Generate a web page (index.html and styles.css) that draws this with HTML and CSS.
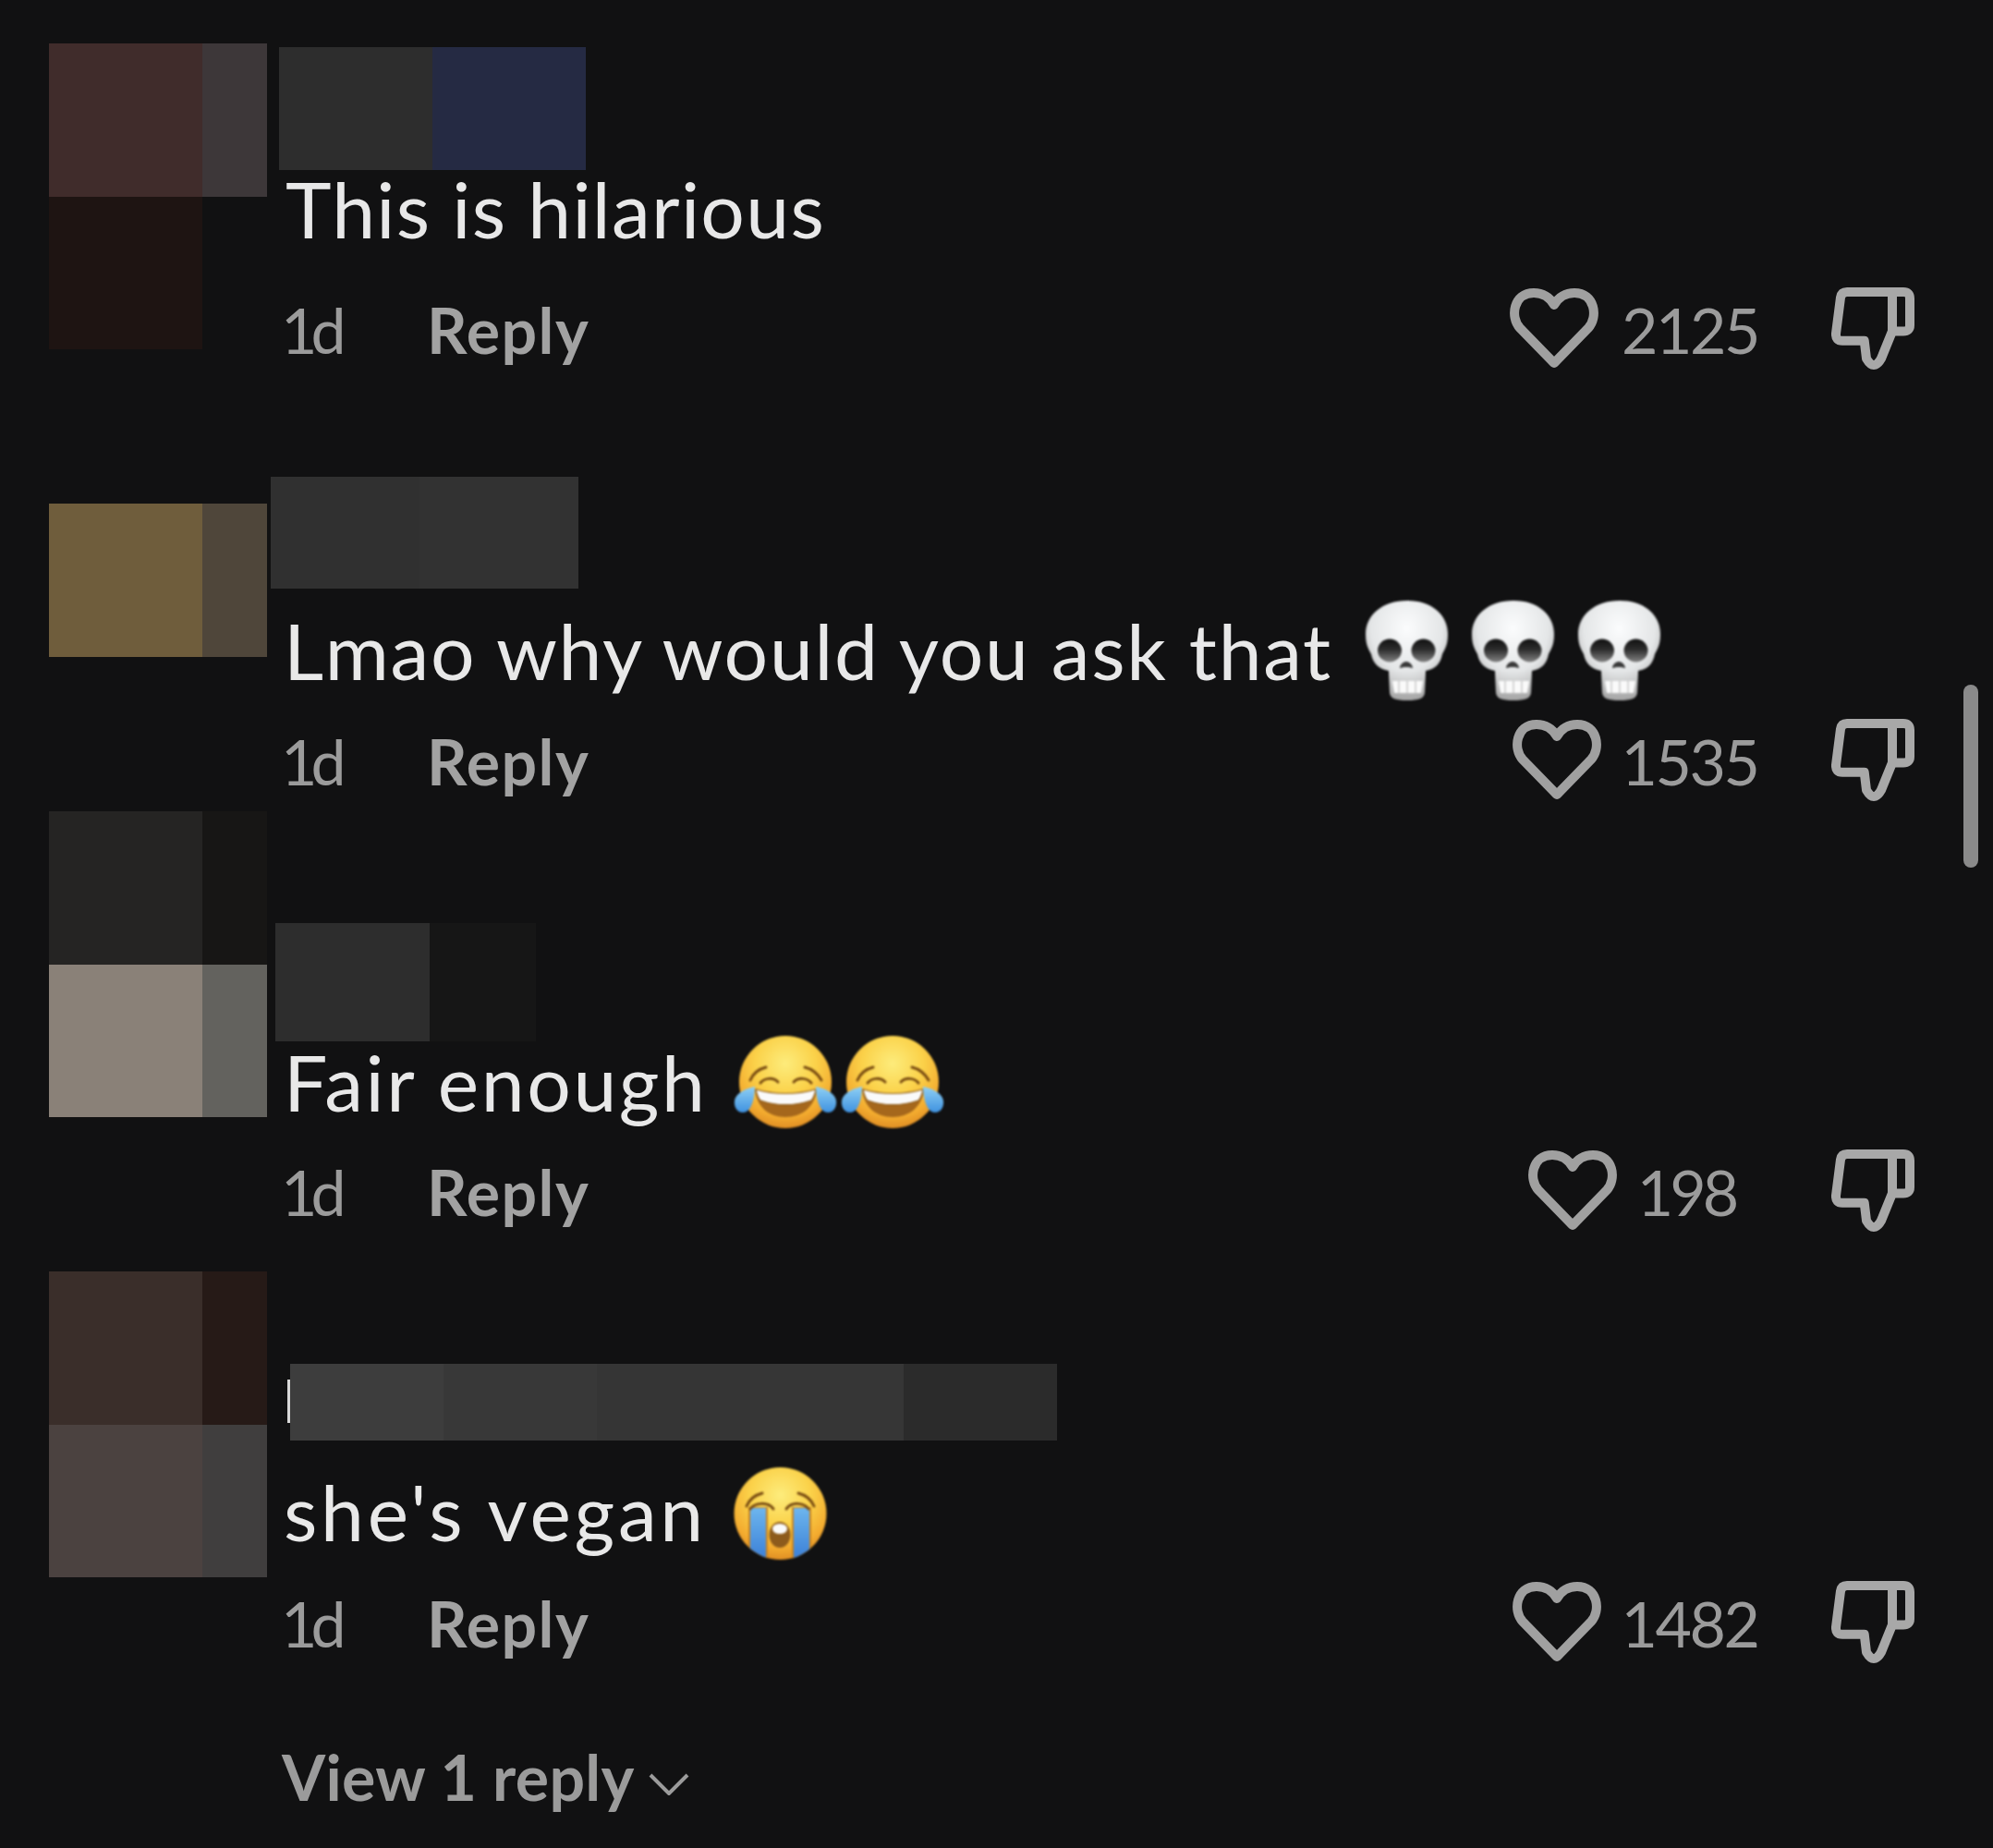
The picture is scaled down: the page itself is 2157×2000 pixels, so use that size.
FILE: index.html
```html
<!DOCTYPE html>
<html lang="en">
<head>
<meta charset="utf-8">
<title>Comments</title>
<link rel="stylesheet" href="styles.css">
</head>
<body>
<svg class="defs" aria-hidden="true">
  <defs>
    <radialGradient id="faceGrad" cx="50%" cy="30%" r="72%">
      <stop offset="0" stop-color="#fdec7c"/>
      <stop offset=".45" stop-color="#fbd24a"/>
      <stop offset=".8" stop-color="#f3ab2f"/>
      <stop offset="1" stop-color="#dd8a22"/>
    </radialGradient>
    <linearGradient id="tearGrad" x1="0" y1="0" x2="0" y2="1">
      <stop offset="0" stop-color="#8fd0f5"/>
      <stop offset="1" stop-color="#3f92e0"/>
    </linearGradient>
    <linearGradient id="streamGrad" x1="0" y1="0" x2="0" y2="1">
      <stop offset="0" stop-color="#6db6ee"/>
      <stop offset="1" stop-color="#3a7ed6"/>
    </linearGradient>
    <radialGradient id="boneGrad" cx="50%" cy="28%" r="72%">
      <stop offset="0" stop-color="#fbfcfd"/>
      <stop offset=".6" stop-color="#e4e6e7"/>
      <stop offset="1" stop-color="#a4a4a4"/>
    </radialGradient>
    <linearGradient id="socketGrad" x1="0" y1="0" x2="0" y2="1">
      <stop offset="0" stop-color="#111"/>
      <stop offset=".45" stop-color="#2c2c2c"/>
      <stop offset="1" stop-color="#828282"/>
    </linearGradient>
    <clipPath id="faceClip"><circle cx="50.5" cy="51" r="50"/></clipPath>
    <symbol id="skull" viewBox="0 0 90 108">
      <path fill="url(#boneGrad)" d="M45 0C72 0 89 16 89 36C89 48 86 52 83 58C81 68 76 74 65 76L64 100C63 106 58 108 45 108C32 108 27 106 26 100L25 76C14 74 8 68 6 58C3 52 0 48 0 36C0 16 18 0 45 0Z"/>
      <ellipse cx="26" cy="54" rx="13" ry="12.5" fill="url(#socketGrad)"/>
      <ellipse cx="62.5" cy="54" rx="13" ry="12.5" fill="url(#socketGrad)"/>
      <path fill="#3a3a3a" d="M44 66C48 66 51 70 51 73C47 71.500 41 71.500 37 73C37 70 40 66 44 66Z"/>
      <path fill="#fafafa" d="M29 87H62L60 100H31Z"/>
      <path stroke="#c4c4c4" stroke-width="1.300" d="M36 87V100M45 87V100M54 87V100"/>
    </symbol>
    <symbol id="laugh" viewBox="0 0 112 104">
      <circle cx="56" cy="51" r="50" fill="url(#faceGrad)"/>
      <path fill="none" stroke="#7a4d12" stroke-width="3" stroke-linecap="round" d="M18 49C21 42 27 37 35 35M77 35C85 37 91 42 95 49M29 52C34 46 43 46 48 51M65 51C70 46 79 46 84 52"/>
      <path fill="#a5671c" d="M23 59C44 65 68 65 90 59C88 78 74 89 56 89C38 89 25 78 23 59Z"/>
      <path fill="#fafafa" stroke="#8b5a17" stroke-width="1.200" d="M24 59C44 65 68 65 89 59C88 64 86 69 84 71C66 77 46 77 29 71C26 68 25 64 24 59Z"/>
      <path fill="url(#tearGrad)" d="M23 56C23 66 20 84 10 84C2 84 -1 74 2 68C6 61 14 58 23 56Z"/>
      <path fill="url(#tearGrad)" d="M89 56C89 66 92 84 102 84C110 84 113 74 110 68C106 61 98 58 89 56Z"/>
    </symbol>
    <symbol id="sob" viewBox="0 0 101 102">
      <circle cx="50.5" cy="51" r="50" fill="url(#faceGrad)"/>
      <g clip-path="url(#faceClip)">
        <path fill="#c98420" d="M16 44H37V102H16ZM63 44H84V102H63Z"/>
        <path fill="url(#streamGrad)" d="M18 45H35V102H18ZM65 45H82V102H65Z"/>
      </g>
      <path fill="none" stroke="#7a4d12" stroke-width="3" stroke-linecap="round" d="M14 43C17 36 23 31 31 29M70 29C78 31 84 36 87 43M18 46C23 39 37 38 43 46M57 46C63 38 76 39 81 46"/>
      <ellipse cx="50" cy="74" rx="11.500" ry="14" fill="#8d5b1c"/>
      <ellipse cx="50" cy="67.500" rx="8" ry="5.500" fill="#fbfbfb"/>
    </symbol>
    <symbol id="heart" viewBox="0 0 96 88">
      <path fill="none" stroke="currentColor" stroke-width="10" stroke-linejoin="round" d="M48 81L11 43C0 31 4 5 26 5C37 5 44 11 48 18C52 11 59 5 70 5C92 5 96 31 85 43Z"/>
    </symbol>
    <symbol id="thumb" viewBox="0 0 90 90">
      <path fill="none" stroke="currentColor" stroke-width="10" stroke-linejoin="round" d="M17 5H78Q85 5 85 12V41Q85 47.500 78 47.500H66M66 5V47.500L54 77Q46 91 38 77L35.700 57.700H12Q4.500 57.700 5 50L10 11Q11 5 17 5Z"/>
    </symbol>
  </defs>
</svg>

<main class="list">
  <article class="comment c1">
    <div class="avatar">
      <i class="cell a1a"></i><i class="cell a1b"></i><i class="cell a1c"></i><i class="cell"></i>
    </div>
    <div class="body">
      <div class="slot"><div class="name"><i class="n1a"></i><i class="n1b"></i></div></div>
      <p class="text"><span>This is hilarious</span></p>
      <div class="meta">
        <span class="time">1d</span><span class="reply">Reply</span>
        <span class="likes"><svg class="heart"><use href="#heart"/></svg><span class="count">2125</span></span>
        <svg class="thumb"><use href="#thumb"/></svg>
      </div>
    </div>
  </article>

  <article class="comment c2">
    <div class="avatar">
      <i class="cell a2a"></i><i class="cell a2b"></i>
    </div>
    <div class="body">
      <div class="slot"><div class="name"><i class="n2a"></i><i class="n2b"></i></div></div>
      <p class="text"><span>Lmao why would you ask that</span>
        <svg class="skull first"><use href="#skull"/></svg>
        <svg class="skull"><use href="#skull"/></svg>
        <svg class="skull"><use href="#skull"/></svg>
      </p>
      <div class="meta">
        <span class="time">1d</span><span class="reply">Reply</span>
        <span class="likes"><svg class="heart"><use href="#heart"/></svg><span class="count">1535</span></span>
        <svg class="thumb"><use href="#thumb"/></svg>
      </div>
    </div>
  </article>

  <article class="comment c3">
    <div class="avatar">
      <i class="cell a3a"></i><i class="cell a3b"></i><i class="cell a3c"></i><i class="cell a3d"></i>
    </div>
    <div class="body">
      <div class="slot"><div class="name"><i class="n3a"></i><i class="n3b"></i></div></div>
      <p class="text"><span>Fair enough</span>
        <svg class="laugh first"><use href="#laugh"/></svg>
        <svg class="laugh"><use href="#laugh"/></svg>
      </p>
      <div class="meta">
        <span class="time">1d</span><span class="reply">Reply</span>
        <span class="likes"><svg class="heart"><use href="#heart"/></svg><span class="count">198</span></span>
        <svg class="thumb"><use href="#thumb"/></svg>
      </div>
    </div>
  </article>

  <article class="comment c4">
    <div class="avatar">
      <i class="cell a4a"></i><i class="cell a4b"></i><i class="cell a4c"></i><i class="cell a4d"></i>
    </div>
    <div class="body">
      <div class="slot"><div class="name"><b class="sliver"></b><i class="n4a"></i><i class="n4b"></i><i class="n4c"></i><i class="n4d"></i><i class="n4e"></i></div></div>
      <p class="text"><span>she's vegan</span>
        <svg class="sob first"><use href="#sob"/></svg>
      </p>
      <div class="meta">
        <span class="time">1d</span><span class="reply">Reply</span>
        <span class="likes"><svg class="heart"><use href="#heart"/></svg><span class="count">1482</span></span>
        <svg class="thumb"><use href="#thumb"/></svg>
      </div>
    </div>
  </article>

  <div class="more">
    <span>View 1 reply</span>
    <svg class="chevron" viewBox="0 0 44 24"><path d="M2 2L22 22L42 2"/></svg>
  </div>
</main>
<div class="scrollbar"></div>
</body>
</html>
```
FILE: styles.css
```css
* { box-sizing: border-box; }
html, body { margin: 0; padding: 0; }
body {
  width: 2157px;
  height: 2000px;
  overflow: hidden;
  background: #111112;
  font-family: "Lato", "Liberation Sans", sans-serif;
  position: relative;
}
.defs { display: block; width: 0; height: 0; overflow: hidden; }

.comment {
  display: flex;
  height: 466.5px;
  padding-left: 53px;
}

/* avatar mosaic */
.avatar {
  display: grid;
  grid-template-columns: 166px 70px;
  grid-auto-rows: 165.5px;
  width: 236px;
  flex: none;
  align-self: flex-start;
}
.cell { display: block; }
.c1 .avatar { margin-top: 47px; }
.c2 .avatar { margin-top: 78.5px; }
.c3 .avatar { margin-top: -55px; }
.c4 .avatar { margin-top: -23.5px; }
.a1a { background: #402c2b; }
.a1b { background: #3d3739; }
.a1c { background: #1e1412; }
.a2a { background: #6f5d3c; }
.a2b { background: #4f463a; }
.a3a { background: #252423; }
.a3b { background: #171615; }
.a3c { background: #8a8178; }
.a3d { background: #63625e; }
.a4a { background: #3a2e2a; }
.a4b { background: #261a17; }
.a4c { background: #4b4240; }
.a4d { background: #403e3e; }

/* body */
.body {
  flex: 1;
  display: flex;
  flex-direction: column;
  padding: 0 85px 59.5px 18px;
  height: 100%;
  min-width: 0;
}
.slot { flex: none; }
.name { display: flex; }
.name i { display: block; width: 166px; }
.c1 .slot { height: 175.5px; }
.c2 .slot { height: 187px; }
.c3 .slot { height: 187.5px; }
.c4 .slot { height: 186px; }

.c1 .name { height: 133px; margin: 51px 0 0 -5px; }
.n1a { background: #2d2d2d; }
.name .n1b { background: #252a43; width: 166px; }

.c2 .name { height: 121px; margin: 49.5px 0 0 -14px; }
.name .n2a { background: #303030; width: 161px; }
.name .n2b { background: #323232; width: 172px; }

.c3 .name { height: 128px; margin: 66px 0 0 -9px; }
.name .n3a { background: #2d2d2d; width: 167px; }
.name .n3b { background: #161616; width: 115px; }

.c4 .name { height: 83px; margin: 76.5px 0 0 4px; }
.sliver { display: block; width: 3px; height: 47px; margin-top: 17px; background: #d8d8d8; }
.n4a { background: #3d3d3d; }
.n4b { background: #383838; }
.n4c { background: #353535; }
.n4d { background: #363636; }
.n4e { background: #2b2b2b; }

/* comment text */
.text {
  display: flex;
  align-items: flex-start;
  height: 100px;
  margin: 0;
  font-size: 84px;
  line-height: 100px;
  color: #e8e8e8;
  white-space: nowrap;
}
.c1 .text { letter-spacing: 1.3px; padding-left: 2px; }
.c2 .text { letter-spacing: 1.7px; }
.c3 .text { letter-spacing: 2.6px; }
.c4 .text { letter-spacing: 3.7px; }
.text span { filter: blur(0.5px); }
.skull, .laugh, .sob { flex: none; filter: blur(0.8px); }
.skull { width: 90px; height: 108px; margin: -3.500px 0 0 25px; }
.skull.first { margin-left: 36.500px; }
.laugh { width: 112px; height: 104px; margin: -1px 0 0 4px; }
.laugh.first { margin-left: 28px; }
.sob { width: 101px; height: 102px; margin: 1.500px 0 0 29px; }

/* meta row */
.meta {
  display: flex;
  align-items: flex-start;
  height: 100px;
  margin-top: auto;
  font-size: 68px;
  line-height: 99px;
  color: #9b9b9b;
}
.time { width: 158px; margin-left: -3px; letter-spacing: -7px; filter: blur(0.4px); }
.reply { font-weight: 700; letter-spacing: 1.400px; color: #a2a2a2; filter: blur(0.4px); }
.likes {
  display: flex;
  justify-content: center;
  gap: 22px;
  width: 304px;
  margin-left: auto;
}
.c1 .likes { gap: 25px; padding-right: 1px; }
.c2 .likes, .c4 .likes { padding-left: 1px; }
.c3 .likes { padding-right: 6px; }
.count { letter-spacing: -2.500px; filter: blur(0.4px); }
.c3 .count { letter-spacing: -4px; }
.heart { width: 96px; height: 88px; margin-top: 5px; color: #a0a0a0; flex: none; }
.thumb { width: 90px; height: 90px; margin: 4px 0 0 61px; color: #a8a8a8; flex: none; }

/* view replies */
.more {
  display: flex;
  align-items: flex-start;
  gap: 15px;
  padding-left: 305px;
  font-size: 68px;
  font-weight: 700;
  letter-spacing: 0.300px;
  line-height: 99px;
  color: #9b9b9b;
  margin-top: 7px;
}
.chevron { width: 44px; height: 24px; margin-top: 46px; fill: none; stroke: #9b9b9b; stroke-width: 4; }

.scrollbar {
  position: absolute;
  left: 2125px;
  top: 741px;
  width: 16px;
  height: 198px;
  border-radius: 8px;
  background: #8a8a8a;
}
```
